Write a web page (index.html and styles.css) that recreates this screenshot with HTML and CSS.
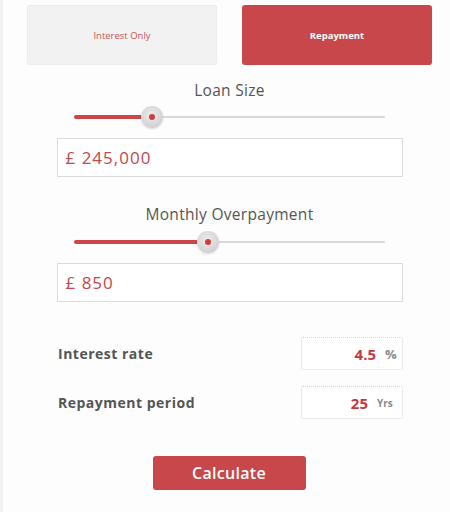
FILE: index.html
```html
<!DOCTYPE html>
<html>
<head>
<meta charset="utf-8">
<link rel="stylesheet" href="styles.css">
</head>
<body>
<div class="page">
  <div class="tabs">
    <div class="tab tab-off">Interest Only</div>
    <div class="tab tab-on">Repayment</div>
  </div>

  <div class="section">
    <div class="section-title">Loan Size</div>
    <div class="slider">
      <div class="fill" style="width:78px"></div>
      <div class="thumb" style="left:78px"><span class="dot"></span></div>
    </div>
    <div class="amount">£ 245,000</div>
  </div>

  <div class="section sec2">
    <div class="section-title">Monthly Overpayment</div>
    <div class="slider">
      <div class="fill" style="width:134px"></div>
      <div class="thumb" style="left:134px"><span class="dot"></span></div>
    </div>
    <div class="amount">£ 850</div>
  </div>

  <div class="rows">
    <div class="row">
      <div class="row-label">Interest rate</div>
      <div class="box"><span class="val">4.5</span><span class="unit">%</span></div>
    </div>
    <div class="row">
      <div class="row-label">Repayment period</div>
      <div class="box"><span class="val">25</span><span class="unit small">Yrs</span></div>
    </div>
  </div>

  <div class="actions">
    <button class="calc">Calculate</button>
  </div>
</div>
</body>
</html>
```

FILE: styles.css
```css
html, body {
  margin: 0;
  padding: 0;
  background: #ffffff;
}
body {
  font-family: "Open Sans", "Liberation Sans", sans-serif;
  width: 450px;
  height: 512px;
  overflow: hidden;
}
.page {
  box-sizing: border-box;
  height: 512px;
  border-left: 3px solid #f1f1f1;
  background: #fdfdfd;
  padding-top: 5px;
}
.tabs {
  display: flex;
  gap: 25px;
  padding-left: 24px;
}
.tab {
  box-sizing: border-box;
  width: 190px;
  height: 60px;
  display: flex;
  align-items: center;
  justify-content: center;
  font-size: 9.5px;
  border-radius: 3px;
}
.tab-off {
  background: #f2f2f2;
  color: #c4575c;
  border: 1px solid #ececec;
  border-radius: 2px;
}
.tab-on {
  background: #c8474a;
  color: #ffffff;
  font-weight: 700;
}
.section {
  display: flex;
  flex-direction: column;
  align-items: center;
  margin-top: 15px;
  padding-left: 6px;
}
.sec2 { margin-top: 27px; }
.section-title {
  font-size: 15.5px;
  color: #555555;
  font-weight: 500;
  letter-spacing: 0.3px;
  line-height: 20px;
}
.slider {
  position: relative;
  width: 311px;
  height: 24px;
  margin-top: 5px;
}
.sec2 .slider { margin-top: 6px; }
.slider::before {
  content: "";
  position: absolute;
  left: 0;
  right: 0;
  top: 11px;
  height: 2px;
  background: #d8d8d8;
  border-radius: 1px;
}
.fill {
  position: absolute;
  left: 0;
  top: 10px;
  height: 4px;
  background: #cc4548;
  border-radius: 2px;
}
.thumb {
  position: absolute;
  top: 1px;
  width: 22px;
  height: 22px;
  margin-left: -11px;
  border-radius: 50%;
  background: radial-gradient(circle at 45% 40%, #ececec 0%, #d6d6d6 60%, #c2c2c2 100%);
  box-shadow: 0 1px 2px rgba(0,0,0,0.15);
  display: flex;
  align-items: center;
  justify-content: center;
}
.dot {
  width: 6px;
  height: 6px;
  border-radius: 50%;
  background: #d03c3f;
}
.amount {
  box-sizing: border-box;
  width: 346px;
  height: 39px;
  margin-top: 9px;
  border: 1px solid #dcdcdc;
  background: #ffffff;
  color: #c4474a;
  font-size: 17px;
  font-weight: 500;
  letter-spacing: 1px;
  display: flex;
  align-items: center;
  padding-left: 8px;
}
.rows {
  margin-top: 35px;
  padding-left: 55px;
  padding-right: 47px;
  display: flex;
  flex-direction: column;
  gap: 16px;
}
.row {
  display: flex;
  align-items: center;
  justify-content: space-between;
}
.row-label {
  font-size: 14px;
  font-weight: 700;
  color: #555555;
  letter-spacing: 0.5px;
}
.box {
  box-sizing: border-box;
  width: 102px;
  height: 33px;
  background: #ffffff;
  border: 1px dotted #d6d6d6;
  border-radius: 2px;
  display: flex;
  align-items: center;
  justify-content: flex-end;
  padding-right: 5px;
  gap: 9px;
}
.val {
  color: #c4393c;
  font-weight: 700;
  font-size: 15px;
}
.unit {
  color: #8a8a8a;
  font-weight: 700;
  font-size: 13px;
  width: 12px;
}
.unit.small {
  font-size: 10px;
  width: 20px;
}
.actions {
  display: flex;
  justify-content: center;
  margin-top: 37px;
  padding-left: 5px;
}
.calc {
  width: 153px;
  height: 34px;
  background: #c8474a;
  color: #ffffff;
  border: none;
  border-radius: 3px;
  font-family: "Open Sans", "Liberation Sans", sans-serif;
  font-size: 16px;
  font-weight: 600;
  letter-spacing: 0.3px;
}
```
